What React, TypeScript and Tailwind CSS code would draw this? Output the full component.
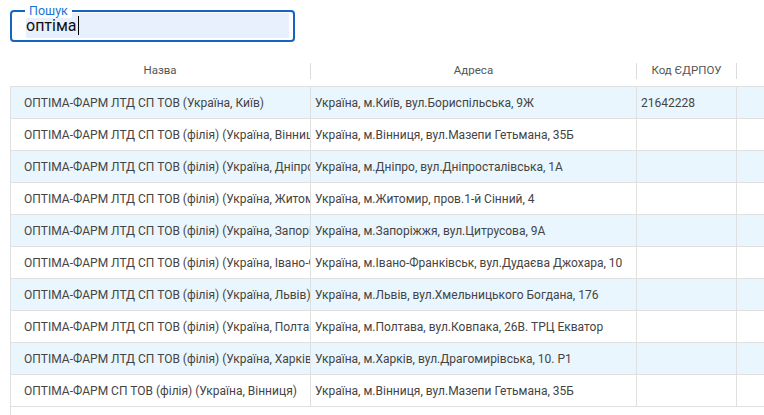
import React from 'react';

type Row = { name: string; address: string; code: string };

const ROWS: Row[] = [
  { name: 'ОПТІМА-ФАРМ ЛТД СП ТОВ (Україна, Київ)', address: 'Україна, м.Київ, вул.Бориспільська, 9Ж', code: '21642228' },
  { name: 'ОПТІМА-ФАРМ ЛТД СП ТОВ (філія) (Україна, Вінниця)', address: 'Україна, м.Вінниця, вул.Мазепи Гетьмана, 35Б', code: '' },
  { name: 'ОПТІМА-ФАРМ ЛТД СП ТОВ (філія) (Україна, Дніпро)', address: 'Україна, м.Дніпро, вул.Дніпросталівська, 1А', code: '' },
  { name: 'ОПТІМА-ФАРМ ЛТД СП ТОВ (філія) (Україна, Житомир)', address: 'Україна, м.Житомир, пров.1-й Сінний, 4', code: '' },
  { name: 'ОПТІМА-ФАРМ ЛТД СП ТОВ (філія) (Україна, Запоріжжя)', address: 'Україна, м.Запоріжжя, вул.Цитрусова, 9А', code: '' },
  { name: 'ОПТІМА-ФАРМ ЛТД СП ТОВ (філія) (Україна, Івано-Франківськ)', address: 'Україна, м.Івано-Франківськ, вул.Дудаєва Джохара, 10', code: '' },
  { name: 'ОПТІМА-ФАРМ ЛТД СП ТОВ (філія) (Україна, Львів)', address: 'Україна, м.Львів, вул.Хмельницького Богдана, 176', code: '' },
  { name: 'ОПТІМА-ФАРМ ЛТД СП ТОВ (філія) (Україна, Полтава)', address: 'Україна, м.Полтава, вул.Ковпака, 26В. ТРЦ Екватор', code: '' },
  { name: 'ОПТІМА-ФАРМ ЛТД СП ТОВ (філія) (Україна, Харків)', address: 'Україна, м.Харків, вул.Драгомирівська, 10. Р1', code: '' },
  { name: 'ОПТІМА-ФАРМ СП ТОВ (філія) (Україна, Вінниця)', address: 'Україна, м.Вінниця, вул.Мазепи Гетьмана, 35Б', code: '' },
];

export default function App() {
  return (
    <div
      className="h-[415px] w-[764px] overflow-hidden bg-white flex flex-col"
      style={{ fontFamily: 'Roboto, "Noto Sans", sans-serif' }}
    >
      {/* Search field */}
      <div className="relative ml-[10px] mt-[10px] w-[285px] h-[32px] border-2 border-[#1565c0] rounded-[4px] shrink-0">
        <span className="absolute left-[13px] top-[-8px] px-[4px] bg-white text-[12.5px] leading-[14px] text-[#1976d2]">
          Пошук
        </span>
        <div className="ml-[14px] mt-px w-[263px] h-[25px] bg-[#e8f0fe] flex items-center text-[16px] text-[#111]">
          <span>оптіма</span>
          <span className="w-px h-[19px] bg-black ml-px" />
        </div>
      </div>

      {/* Table */}
      <div className="mt-[13px] ml-[10px] flex flex-col flex-1 min-h-0">
        {/* Header */}
        <div className="flex items-center h-[32px] border-b border-[#e0e0e0] text-[11.5px] text-[#555] shrink-0">
          <div className="w-[300px] text-center">Назва</div>
          <div className="w-px h-4 bg-[#dcdcdc]" />
          <div className="w-[325px] text-center">Адреса</div>
          <div className="w-px h-4 bg-[#dcdcdc]" />
          <div className="w-[99px] text-center">Код ЄДРПОУ</div>
          <div className="w-px h-4 bg-[#dcdcdc]" />
          <div className="flex-1" />
        </div>

        {/* Body */}
        <div className="flex-1 border-l border-[#e0e0e0] text-[12px] text-[#444]">
          {ROWS.map((r, i) => (
            <div
              key={i}
              className={`flex h-[32px] border-b border-[#e0e0e0] ${i % 2 === 0 ? 'bg-[#eaf6fd]' : 'bg-white'}`}
            >
              <div className="w-[300px] shrink-0 border-r border-[#e0e0e0] pl-[13px] flex items-center overflow-hidden whitespace-nowrap">
                {r.name}
              </div>
              <div className="w-[326px] shrink-0 border-r border-[#e0e0e0] pl-[4px] flex items-center overflow-hidden whitespace-nowrap">
                {r.address}
              </div>
              <div className="w-[100px] shrink-0 border-r border-[#e0e0e0] pl-[4px] flex items-center overflow-hidden whitespace-nowrap">
                {r.code}
              </div>
              <div className="flex-1" />
            </div>
          ))}
        </div>
      </div>
    </div>
  );
}
